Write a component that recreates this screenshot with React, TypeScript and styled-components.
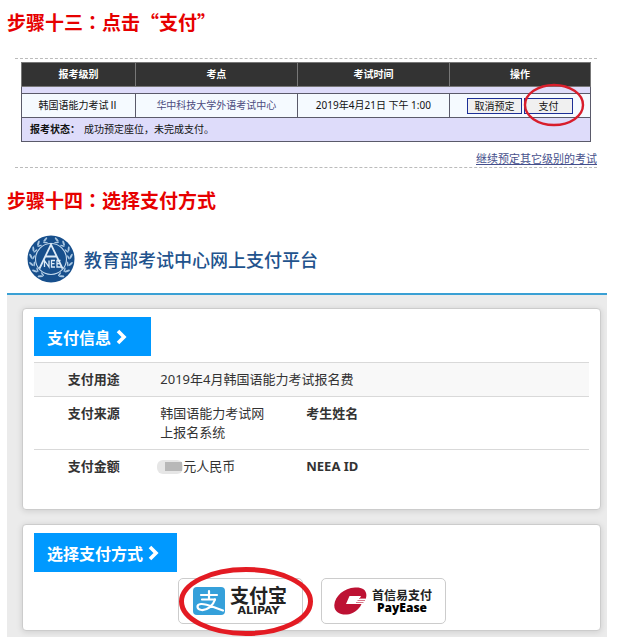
import React from 'react';
import styled, { createGlobalStyle } from 'styled-components';

const GlobalStyle = createGlobalStyle`
  * { box-sizing: border-box; }
  body {
    margin: 0;
    background: #fff;
    color: #333;
    font-family: "Noto Sans", "Noto Sans CJK SC", sans-serif;
  }
  h2, h3, p { margin: 0; }
  button { font-family: inherit; cursor: pointer; }
`;

const Page = styled.main`
  padding: 8px 17px 0 7px;
`;

const StepTitle = styled.h2`
  font: bold 19px/28px "Noto Sans CJK TC", sans-serif;
  color: #e60000;
`;

const Booking = styled.section`
  margin: 22px 10px 18px 8px;
  padding-top: 3px;
  border-top: 1px dashed #bbb;
  border-bottom: 1px dashed #bbb;
`;

const BookingTable = styled.table`
  width: calc(100% - 12px);
  margin-left: 6px;
  border-collapse: collapse;
  table-layout: fixed;
  border: 1px solid #5a5a6a;
  background: #dedcfa;
  color: #111;
  font-size: 10px;
  line-height: 15px;
`;

const HeadCell = styled.th<{ $width: string }>`
  width: ${(p) => p.$width};
  height: 24px;
  padding: 0;
  border: 1px solid #777;
  background: #333;
  color: #fff;
`;

const SpacerCell = styled.td`
  height: 7px;
  padding: 0;
`;

const BookingCell = styled.td<{ $muted?: boolean }>`
  height: 24px;
  padding: 0;
  border: 1px solid #5a5a6a;
  background: #f5faff;
  color: ${(p) => (p.$muted ? '#4c4c80' : '#111')};
  text-align: center;
`;

const StatusCell = styled.td`
  height: 24px;
  padding: 0 8px;
  border-top: 1px solid #5a5a6a;
`;

const StatusLabel = styled.b`
  margin-right: 4px;
`;

const Actions = styled.div`
  display: flex;
  justify-content: center;
  gap: 2px;
`;

const Marked = styled.span`
  position: relative;
  display: flex;
`;

const ActionButton = styled.button<{ $wide?: boolean }>`
  height: 16px;
  width: ${(p) => (p.$wide ? '55px' : '49px')};
  padding: 0;
  border: 1px solid #1c2f96;
  background: #f0f0f0;
  color: #111;
  font-size: 10px;
  line-height: 14px;
`;

const PayMark = styled.svg`
  position: absolute;
  left: -1px;
  top: -15px;
  width: 62px;
  height: 44px;
  pointer-events: none;
`;

const MoreLine = styled.p`
  padding-top: 8px;
  text-align: right;
  font-size: 11px;
  line-height: 17px;
`;

const MoreLink = styled.a`
  color: #46508c;
  text-decoration: underline;
`;

const Brand = styled.header`
  display: flex;
  align-items: center;
  gap: 9px;
  padding: 21px 20px 10px;
`;

const BrandName = styled.span`
  color: #22538d;
  font: 500 18px/28px "Noto Sans CJK SC", sans-serif;
`;

const Panel = styled.div`
  display: flex;
  flex-direction: column;
  gap: 14px;
  padding: 13px 6px 6px 15px;
  border-top: 2px solid #3aa0d4;
  background: #ebebeb;
`;

const Card = styled.section<{ $bottom: string }>`
  padding: 8px 11px ${(p) => p.$bottom};
  border: 1px solid #ccc;
  border-radius: 4px;
  background: #fff;
  box-shadow: 0 1px 6px rgba(0, 0, 0, 0.13);
`;

const CardTitle = styled.h3<{ $end: string }>`
  display: flex;
  align-items: center;
  gap: 5px;
  width: max-content;
  height: 39px;
  margin-bottom: 6px;
  padding: 0 ${(p) => p.$end} 0 13px;
  background: #0099ff;
  color: #fff;
  font: bold 16px/24px "Noto Sans CJK SC", sans-serif;
`;

const InfoTable = styled.table`
  width: 100%;
  border-collapse: collapse;
  table-layout: fixed;
  font-size: 13px;
  line-height: 19px;
`;

const InfoRow = styled.tr<{ $shaded?: boolean }>`
  border-top: 1px solid #d9d9d9;
  background: ${(p) => (p.$shaded ? '#f8f8f8' : '#fff')};
`;

const InfoLabel = styled.th`
  padding: 7px 0;
  vertical-align: top;
`;

const InfoValue = styled.td`
  padding: 7px;
  vertical-align: top;
`;

const Amount = styled.span`
  display: flex;
  align-items: center;
`;

const HiddenAmount = styled.span`
  width: 26px;
  height: 14px;
  margin-left: -3px;
  padding: 2px 1px 3px 8px;
  border-radius: 6px;
  background: #e6e6e6;

  &::before {
    content: "";
    display: block;
    height: 9px;
    background: #b8b8b8;
  }
`;

const Options = styled.div`
  display: flex;
  justify-content: center;
  gap: 18px;
`;

const OptionButton = styled.button`
  display: flex;
  align-items: center;
  justify-content: center;
  gap: 5px;
  width: 125px;
  height: 46px;
  padding: 0;
  border: 1px solid #ccc;
  border-radius: 5px;
  background: #fff;
  color: #222;
`;

const OptionMark = styled.svg`
  position: absolute;
  left: 0;
  top: -12px;
  width: 136px;
  height: 71px;
  pointer-events: none;
`;

const Wordmark = styled.span`
  display: flex;
  flex-direction: column;
  align-items: center;
`;

const AlipayCn = styled.span`
  font: bold 19px/20px "Noto Sans CJK SC", sans-serif;
`;

const AlipayEn = styled.span`
  font: bold 11px/12px "DejaVu Sans", sans-serif;
`;

const PayEaseCn = styled.span`
  font: bold 12px/13px "Noto Sans CJK SC", sans-serif;
`;

const PayEaseEn = styled.span`
  color: #000;
  font: 800 12px/13px "Open Sans", sans-serif;
`;

const Chevron = () => (
  <svg width="11" height="16" viewBox="0 0 11 16" aria-hidden="true">
    <path d="M2 2 L8 8 L2 14" fill="none" stroke="#fff" strokeWidth="3.6" />
  </svg>
);

const leafAngles = [22, 44, 66, 88, 110, 132, 154];

const Emblem = () => (
  <svg width="48" height="48" viewBox="0 0 48 48" role="img" aria-label="NEEA">
    <circle cx="24" cy="24" r="23.5" fill="#174f8c" />
    <g fill="#a9c7e2">
      {leafAngles.map((a) => (
        <React.Fragment key={a}>
          <g transform={`rotate(${a} 24 24)`}>
            <ellipse cx="22" cy="3.8" rx="2.8" ry="1" transform="rotate(28 22 3.8)" />
            <ellipse cx="23" cy="6.600" rx="2.4" ry=".8" transform="rotate(-25 23 6.6)" />
          </g>
          <g transform={`rotate(${-a} 24 24)`}>
            <ellipse cx="26" cy="3.8" rx="2.8" ry="1" transform="rotate(-28 26 3.8)" />
            <ellipse cx="25" cy="6.600" rx="2.4" ry=".8" transform="rotate(25 25 6.6)" />
          </g>
        </React.Fragment>
      ))}
    </g>
    <circle cx="24" cy="24" r="15.5" fill="#174f8c" stroke="#c3d9ed" strokeWidth="1.1" />
    <path d="M12.5 33.500 L24 9.500 L35.5 33.500 M18.500 21.500 H29.500" fill="none" stroke="#dceaf6" strokeWidth="1.8" />
    <path
      d="M17.500 32 V25.500 L22 32 V25.500 M28 25.500 H24.5 V32 H28 M24.5 28.700 H27.5 M33.500 25.500 H30 V32 H34 M30 28.700 H33"
      fill="none"
      stroke="#dceaf6"
      strokeWidth="1.3"
    />
  </svg>
);

const AlipayIcon = () => (
  <svg width="32" height="28" viewBox="0 0 32 28" aria-hidden="true">
    <rect width="32" height="28" rx="4" fill="#35a0da" />
    <g fill="none" stroke="#fff" strokeWidth="2.2" strokeLinecap="round">
      <path d="M8 8 H24 M16 4 V12 M9 12.5 H22" />
      <path d="M22 12.5 C20 19 14 23.5 8.500 23 C3.500 22.500 3 17.500 8 17 C14 16.500 20 20.500 30 23.500" />
    </g>
  </svg>
);

const PayEaseIcon = () => (
  <svg width="33" height="28" viewBox="0 0 33 28" aria-hidden="true">
    <path
      d="M32 11 C34 3 28 0 21 .5 C10 1 1 9 .3 18 C0 25 6 28 13 27.500 C19 27 25 23 27.500 17 L12 17 L15.500 9 L27 9 L26 11 Z"
      fill="#bd1233"
    />
    <path d="M25 11.500 H32 M23.500 13.500 H31 M22 15.500 H29.500" fill="none" stroke="#d87789" strokeWidth="1.2" />
  </svg>
);

export default function App() {
  return (
    <>
      <GlobalStyle />
      <Page>
        <StepTitle>步骤十三：点击“支付”</StepTitle>
        <Booking>
          <BookingTable>
            <thead>
              <tr>
                <HeadCell $width="20%">报考级别</HeadCell>
                <HeadCell $width="28.5%">考点</HeadCell>
                <HeadCell $width="26.7%">考试时间</HeadCell>
                <HeadCell $width="24.8%">操作</HeadCell>
              </tr>
            </thead>
            <tbody>
              <tr>
                <SpacerCell colSpan={4} />
              </tr>
              <tr>
                <BookingCell>韩国语能力考试Ⅱ</BookingCell>
                <BookingCell $muted>华中科技大学外语考试中心</BookingCell>
                <BookingCell>2019年4月21日 下午 1:00</BookingCell>
                <BookingCell>
                  <Actions>
                    <ActionButton $wide>取消预定</ActionButton>
                    <Marked>
                      <ActionButton>支付</ActionButton>
                      <PayMark viewBox="0 0 62 44" aria-hidden="true">
                        <ellipse cx="31" cy="22" rx="29" ry="20" fill="none" stroke="#d81e2c" strokeWidth="2.4" />
                      </PayMark>
                    </Marked>
                  </Actions>
                </BookingCell>
              </tr>
              <tr>
                <StatusCell colSpan={4}>
                  <StatusLabel>报考状态：</StatusLabel>
                  成功预定座位，未完成支付。
                </StatusCell>
              </tr>
            </tbody>
          </BookingTable>
          <MoreLine>
            <MoreLink href="#levels">继续预定其它级别的考试</MoreLink>
          </MoreLine>
        </Booking>

        <StepTitle>步骤十四：选择支付方式</StepTitle>
        <Brand>
          <Emblem />
          <BrandName>教育部考试中心网上支付平台</BrandName>
        </Brand>
        <Panel>
          <Card $bottom="26px">
            <CardTitle $end="24px">
              支付信息
              <Chevron />
            </CardTitle>
            <InfoTable>
              <colgroup>
                <col width="21.5%" />
                <col width="22%" />
                <col width="20.5%" />
                <col />
              </colgroup>
              <tbody>
                <InfoRow $shaded>
                  <InfoLabel scope="row">支付用途</InfoLabel>
                  <InfoValue colSpan={3}>2019年4月韩国语能力考试报名费</InfoValue>
                </InfoRow>
                <InfoRow>
                  <InfoLabel scope="row">支付来源</InfoLabel>
                  <InfoValue>韩国语能力考试网上报名系统</InfoValue>
                  <InfoLabel scope="row">考生姓名</InfoLabel>
                  <InfoValue />
                </InfoRow>
                <InfoRow>
                  <InfoLabel scope="row">支付金额</InfoLabel>
                  <InfoValue>
                    <Amount>
                      <HiddenAmount />
                      元人民币
                    </Amount>
                  </InfoValue>
                  <InfoLabel scope="row">NEEA ID</InfoLabel>
                  <InfoValue />
                </InfoRow>
              </tbody>
            </InfoTable>
          </Card>
          <Card $bottom="6px">
            <CardTitle $end="18px">
              选择支付方式
              <Chevron />
            </CardTitle>
            <Options>
              <Marked>
                <OptionButton>
                  <AlipayIcon />
                  <Wordmark>
                    <AlipayCn>支付宝</AlipayCn>
                    <AlipayEn>ALIPAY</AlipayEn>
                  </Wordmark>
                </OptionButton>
                <OptionMark viewBox="0 0 136 71" aria-hidden="true">
                  <ellipse cx="68" cy="35.5" rx="64.5" ry="32" fill="none" stroke="#e31b23" strokeWidth="5" />
                </OptionMark>
              </Marked>
              <OptionButton>
                <PayEaseIcon />
                <Wordmark>
                  <PayEaseCn>首信易支付</PayEaseCn>
                  <PayEaseEn>PayEase</PayEaseEn>
                </Wordmark>
              </OptionButton>
            </Options>
          </Card>
        </Panel>
      </Page>
    </>
  );
}
